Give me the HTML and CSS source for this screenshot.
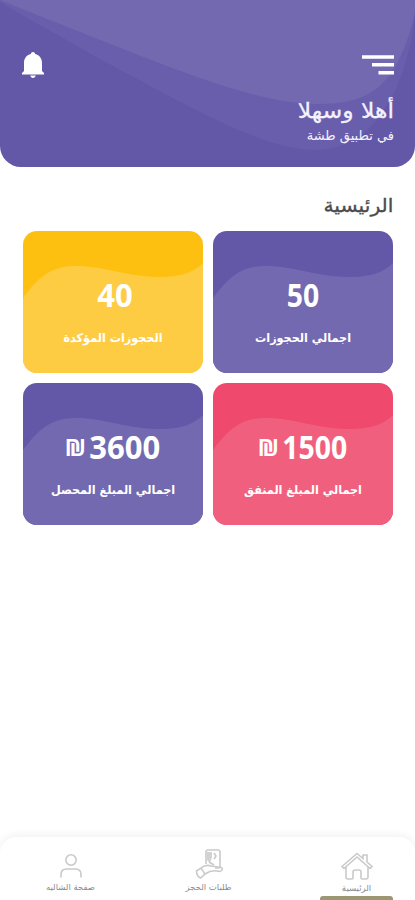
FILE: index.html
```html
<!DOCTYPE html>
<html lang="ar" dir="rtl">
<head>
  <meta charset="UTF-8" />
  <meta name="viewport" content="width=device-width, initial-scale=1.0"/>
  <title>طشة</title>
  <link rel="stylesheet" href="styles.css">
</head>
<body>
  <header class="header">
    <svg class="header-bg" viewBox="0 0 415 167" preserveAspectRatio="none">
      <path fill="#695eac" d="M0 2C65 40 130 76 190 107C240 132 280 150 316 150C370 150 406 95 415 15V0H0Z"/>
      <path fill="#7369b0" d="M0 0C70 28 125 50 175 69C235 91 280 104 317 104C367 104 397 90 415 12V0Z"/>
    </svg>
    <div class="top-bar">
      <svg class="menu-icon" width="33" height="20" viewBox="0 0 33 20">
        <path fill="#fff" d="M1 .2h32v3.600H1zM11 8h22v3.500H11zM17.500 16H33v3.500H17.500z"/>
      </svg>
      <svg class="bell-icon" width="22" height="26" viewBox="0 0 22 26">
        <path fill="#fff" d="M11 0c1.200 0 2 .8 2.200 2C17.500 3 20 6.500 20 11v8l2 2v1.500H0V21l2-2v-8c0-4.500 2.500-8 6.800-9C9 .8 9.800 0 11 0zM8.300 23.500h5.400c-.3 1.500-1.300 2.500-2.700 2.500s-2.400-1-2.700-2.500z"/>
      </svg>
    </div>
    <h1 class="title">أهلا وسهلا</h1>
    <p class="subtitle">في تطبيق طشة</p>
  </header>

  <main class="content">
    <h2 class="section-title">الرئيسية</h2>
    <div class="cards">
      <div class="card purple">
        <svg class="wave" viewBox="0 0 180 142"><path d="M0 67C15 47 28 35 52 35C82 35 103 46 138 46C158 46 171 41 180 32V142H0Z"/></svg>
        <div class="amount"><span class="number">50</span></div>
        <p class="label">اجمالي الحجوزات</p>
      </div>
      <div class="card yellow">
        <svg class="wave" viewBox="0 0 180 142"><path d="M0 67C15 47 28 35 52 35C82 35 103 46 138 46C158 46 171 41 180 32V142H0Z"/></svg>
        <div class="amount shifted"><span class="number wide">40</span></div>
        <p class="label">الحجوزات المؤكدة</p>
      </div>
      <div class="card pink">
        <svg class="wave" viewBox="0 0 180 142"><path d="M0 67C15 47 28 35 52 35C82 35 103 46 138 46C158 46 171 41 180 32V142H0Z"/></svg>
        <div class="amount"><span class="number">1500</span><span class="currency">₪</span></div>
        <p class="label">اجمالي المبلغ المنفق</p>
      </div>
      <div class="card purple">
        <svg class="wave" viewBox="0 0 180 142"><path d="M0 67C15 47 28 35 52 35C82 35 103 46 138 46C158 46 171 41 180 32V142H0Z"/></svg>
        <div class="amount"><span class="number wide">3600</span><span class="currency">₪</span></div>
        <p class="label">اجمالي المبلغ المحصل</p>
      </div>
    </div>
  </main>

  <nav class="bottom-nav">
    <a class="nav-item active">
      <svg width="32" height="28" viewBox="0 0 32 28">
        <path d="M1 14.500L16 1.500l6 5V3h4v7l5 4.500-2 2L16 5 3 16.500zM5 15v10q0 2 2 2h4q1 0 1-1v-6q0-2 2-2h4q2 0 2 2v6q0 1 1 1h4q2 0 2-2V15"/>
      </svg>
      <span>الرئيسية</span>
    </a>
    <a class="nav-item requests">
      <svg width="28" height="30" viewBox="0 0 28 30">
        <path d="M11 15V3q0-2 2-2h10q2 0 2 2v14q0 2-2 2h-3"/>
        <path class="shade" d="M12 3h5v5l-2 6-3-3z"/>
        <path d="M19 4l2 3-2 3M14 13l5 3"/>
        <path d="M1.500 22l4.500-3 4 6-4.500 4q-4-2-4-7zM6 19q5-4 10-2l7 1q5 0 4 3-1 2-5 1-6-1-12 3"/>
      </svg>
      <span>طلبات الحجز</span>
    </a>
    <a class="nav-item profile">
      <svg width="22" height="24" viewBox="0 0 22 24">
        <circle cx="11" cy="6" r="5.200"/>
        <path d="M1 23.500v-3q0-5.500 5.500-5.500h9q5.500 0 5.500 5.500v3"/>
      </svg>
      <span>صفحة الشاليه</span>
    </a>
  </nav>
</body>
</html>
```
FILE: styles.css
```css
* {
  margin: 0;
  padding: 0;
  box-sizing: border-box;
}

body {
  display: flex;
  flex-direction: column;
  height: 100vh;
  overflow: hidden;
  background: #fff;
  font-family: "DejaVu Sans", sans-serif;
}

.header {
  position: relative;
  height: 167px;
  padding: 54px 21px 0 22px;
  border-radius: 0 0 21px 21px;
  background: #6258a7;
  color: #f5f2ff;
  overflow: hidden;
}

.header-bg {
  position: absolute;
  inset: 0;
  width: 100%;
  height: 100%;
}

.top-bar,
.title,
.subtitle {
  position: relative;
}

.top-bar {
  display: flex;
  justify-content: space-between;
  height: 26px;
}

.menu-icon {
  margin-top: 1px;
}

.bell-icon {
  margin-top: -2px;
}

.title {
  width: fit-content;
  margin-top: 16px;
  font-size: 21px;
  font-weight: normal;
  line-height: 30px;
  transform: scaleX(1.12);
  transform-origin: right;
  -webkit-text-stroke: 0.3px;
}

.subtitle {
  font-size: 13px;
  line-height: 20px;
}

.content {
  flex: 1;
  padding: 22px 22px 0 23px;
}

.section-title {
  width: fit-content;
  height: 42px;
  color: #4b4b4b;
  font-size: 19px;
  font-weight: normal;
  line-height: 32px;
  transform: scaleX(1.07);
  transform-origin: right;
  -webkit-text-stroke: 0.3px;
}

.cards {
  display: grid;
  grid-template-columns: 180px 180px;
  grid-auto-rows: 142px;
  gap: 10px;
}

.card {
  position: relative;
  border-radius: 14px;
  color: #fff;
  text-align: center;
  overflow: hidden;
}

.wave {
  position: absolute;
  inset: 0;
  width: 180px;
  height: 142px;
}

.purple { background: #6258a7; }
.purple .wave { fill: #7369b0; }
.yellow { background: #fec010; }
.yellow .wave { fill: #fecc43; }
.pink { background: #ef4a6d; }
.pink .wave { fill: #f15f7e; }

.amount {
  position: relative;
  display: flex;
  justify-content: center;
  align-items: center;
  height: 44px;
  margin-top: 42px;
  font-family: "Noto Sans", sans-serif;
  font-weight: bold;
}

.amount.shifted {
  padding-left: 4px;
}

.number {
  margin: 0 -4px;
  font-size: 33px;
  line-height: 44px;
  transform: scaleX(0.86);
}

.number.wide {
  margin: 0 -1px;
  transform: scaleX(0.94);
}

.currency {
  margin-right: 2px;
  font-size: 23px;
  line-height: 44px;
}

.label {
  position: relative;
  margin-top: 11px;
  font-size: 12px;
  font-weight: bold;
  line-height: 20px;
  white-space: nowrap;
  transform: scaleX(0.935);
}

.bottom-nav {
  display: flex;
  justify-content: space-between;
  height: 63px;
  padding: 0 22px 0 34px;
  border-radius: 16px 16px 0 0;
  background: #fff;
  box-shadow: 0 -2px 8px rgba(0, 0, 0, 0.06);
}

.nav-item {
  position: relative;
  display: flex;
  flex-direction: column;
  align-items: center;
  justify-content: flex-end;
  width: 73px;
  padding-bottom: 5px;
  color: #8a8a8e;
  font-size: 8.5px;
  line-height: 16px;
  white-space: nowrap;
}

.nav-item svg {
  fill: none;
  stroke: #cacaca;
  stroke-width: 1.6;
}

.nav-item .shade {
  fill: #d2d2d2;
  stroke: none;
}

.nav-item.active {
  padding-bottom: 4px;
}

.nav-item.requests {
  margin-right: 10px;
}

.nav-item.profile svg {
  margin-bottom: 1px;
}

.nav-item.active::after {
  content: "";
  position: absolute;
  bottom: 0;
  width: 73px;
  height: 4px;
  border-radius: 3px 3px 0 0;
  background: #9c9673;
}
```
